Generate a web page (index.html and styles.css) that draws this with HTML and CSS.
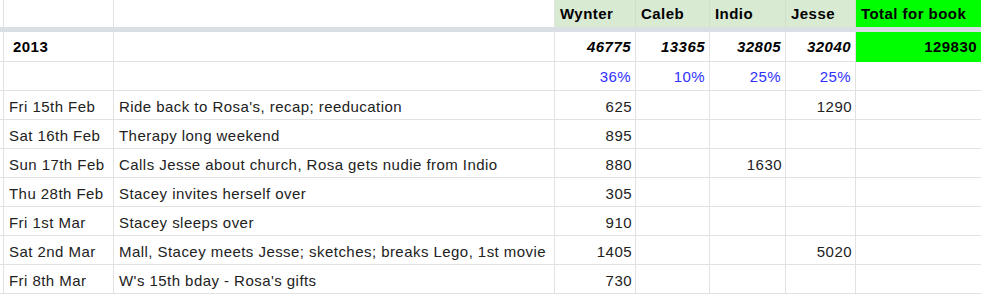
FILE: index.html
```html
<!DOCTYPE html>
<html lang="en">
<head>
<meta charset="utf-8">
<title>Word counts</title>
<link rel="stylesheet" href="styles.css">
</head>
<body>
<div class="sheet">
  <div class="row head">
    <div class="c c0"></div>
    <div class="c ca"></div>
    <div class="c cb"></div>
    <div class="c cc hd">Wynter</div>
    <div class="c cd hd">Caleb</div>
    <div class="c ce hd">Indio</div>
    <div class="c cf hd">Jesse</div>
    <div class="c cg hd tot">Total for book</div>
  </div>
  <div class="freeze"></div>
  <div class="row year">
    <div class="c c0"></div>
    <div class="c ca yr">2013</div>
    <div class="c cb"></div>
    <div class="c cc num bi">46775</div>
    <div class="c cd num bi">13365</div>
    <div class="c ce num bi">32805</div>
    <div class="c cf num bi">32040</div>
    <div class="c cg num b tot">129830</div>
  </div>
  <div class="row pctrow">
    <div class="c c0"></div>
    <div class="c ca"></div>
    <div class="c cb"></div>
    <div class="c cc num pct">36%</div>
    <div class="c cd num pct">10%</div>
    <div class="c ce num pct">25%</div>
    <div class="c cf num pct">25%</div>
    <div class="c cg"></div>
  </div>
  <div class="row">
    <div class="c c0"></div>
    <div class="c ca">Fri 15th Feb</div>
    <div class="c cb">Ride back to Rosa's, recap; reeducation</div>
    <div class="c cc num">625</div>
    <div class="c cd num"></div>
    <div class="c ce num"></div>
    <div class="c cf num">1290</div>
    <div class="c cg"></div>
  </div>
  <div class="row">
    <div class="c c0"></div>
    <div class="c ca">Sat 16th Feb</div>
    <div class="c cb">Therapy long weekend</div>
    <div class="c cc num">895</div>
    <div class="c cd num"></div>
    <div class="c ce num"></div>
    <div class="c cf num"></div>
    <div class="c cg"></div>
  </div>
  <div class="row">
    <div class="c c0"></div>
    <div class="c ca">Sun 17th Feb</div>
    <div class="c cb">Calls Jesse about church, Rosa gets nudie from Indio</div>
    <div class="c cc num">880</div>
    <div class="c cd num"></div>
    <div class="c ce num">1630</div>
    <div class="c cf num"></div>
    <div class="c cg"></div>
  </div>
  <div class="row">
    <div class="c c0"></div>
    <div class="c ca">Thu 28th Feb</div>
    <div class="c cb">Stacey invites herself over</div>
    <div class="c cc num">305</div>
    <div class="c cd num"></div>
    <div class="c ce num"></div>
    <div class="c cf num"></div>
    <div class="c cg"></div>
  </div>
  <div class="row">
    <div class="c c0"></div>
    <div class="c ca">Fri 1st Mar</div>
    <div class="c cb">Stacey sleeps over</div>
    <div class="c cc num">910</div>
    <div class="c cd num"></div>
    <div class="c ce num"></div>
    <div class="c cf num"></div>
    <div class="c cg"></div>
  </div>
  <div class="row">
    <div class="c c0"></div>
    <div class="c ca">Sat 2nd Mar</div>
    <div class="c cb">Mall, Stacey meets Jesse; sketches; breaks Lego, 1st movie</div>
    <div class="c cc num">1405</div>
    <div class="c cd num"></div>
    <div class="c ce num"></div>
    <div class="c cf num">5020</div>
    <div class="c cg"></div>
  </div>
  <div class="row">
    <div class="c c0"></div>
    <div class="c ca">Fri 8th Mar</div>
    <div class="c cb">W's 15th bday - Rosa's gifts</div>
    <div class="c cc num">730</div>
    <div class="c cd num"></div>
    <div class="c ce num"></div>
    <div class="c cf num"></div>
    <div class="c cg"></div>
  </div>
</div>
</body>
</html>
```

FILE: styles.css
```css
html, body {
  margin: 0;
  padding: 0;
  background: #ffffff;
}

.sheet {
  width: 981px;
  overflow: hidden;
  font-family: "Liberation Sans", Arial, sans-serif;
  font-size: 15px;
  letter-spacing: 0.45px;
  color: #222222;
}

.row {
  display: grid;
  grid-template-columns: 4px 110px 441px 81px 74px 76px 70px 1fr;
  height: 29px;
}

.row.head {
  height: 27px;
}

.row.year {
  height: 30px;
}

.freeze {
  height: 5px;
  background: #dadfe5;
}

.c {
  box-sizing: border-box;
  border-right: 1px solid #e2e2e2;
  border-bottom: 1px solid #e2e2e2;
  display: flex;
  align-items: flex-end;
  padding: 0 5px 3px 5px;
  white-space: nowrap;
  overflow: hidden;
  line-height: 18px;
}

.c0 {
  padding: 0;
}

.cg {
  border-right: none;
}

.head .c {
  border-bottom: none;
  padding-bottom: 4px;
}

.year .c {
  padding-bottom: 5px;
}

.pctrow .c {
  padding-bottom: 4px;
}

.hd {
  background: #d9ead3;
  border-right-color: #cfdfc9;
  font-weight: 700;
  color: #000000;
}

.tot {
  background: #00ff00;
  border-right: none;
}

.year .tot {
  border-bottom-color: #00ff00;
}

.num {
  justify-content: flex-end;
  padding-right: 3px;
}

.bi {
  font-weight: 700;
  font-style: italic;
  color: #000000;
  padding-right: 4px;
}

.b {
  font-weight: 700;
  color: #000000;
  padding-right: 4px;
}

.yr {
  font-weight: 700;
  color: #000000;
  padding-left: 9px;
}

.pct {
  color: #2f2fff;
  padding-right: 4px;
}
```
